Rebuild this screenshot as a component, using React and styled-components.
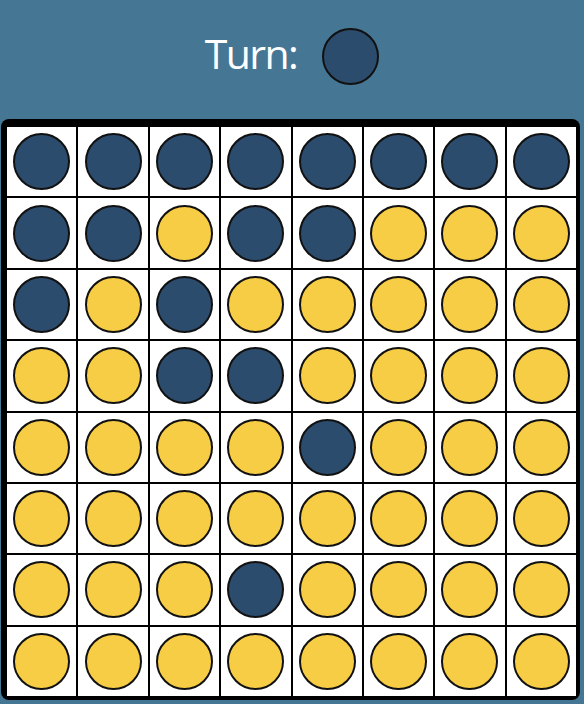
import React from 'react'
import styled, { createGlobalStyle } from 'styled-components'

const GlobalStyle = createGlobalStyle`
  html, body {
    margin: 0;
    padding: 0;
    background: #457795;
  }
  body {
    font-family: "Open Sans", "Noto Sans", sans-serif;
  }
`

const BLUE = '#2c4c6e'
const YELLOW = '#f8cd46'

const board = [
  'BBBBBBBB',
  'BBYBBYYY',
  'BYBYYYYY',
  'YYBBYYYY',
  'YYYYBYYY',
  'YYYYYYYY',
  'YYYBYYYY',
  'YYYYYYYY',
]

const Game = styled.div`
  width: 584px;
  height: 704px;
  overflow: hidden;
`

const TurnBar = styled.header`
  height: 119px;
  box-sizing: border-box;
  padding-bottom: 7px;
  display: flex;
  align-items: center;
  justify-content: center;
  gap: 25px;
  color: #fff;
`

const TurnLabel = styled.span`
  font-size: 41px;
  font-weight: 400;
  letter-spacing: -1.6px;
  line-height: 1;
  margin-top: -5px;
`

const Piece = styled.div`
  width: ${(p) => p.$size}px;
  height: ${(p) => p.$size}px;
  box-sizing: border-box;
  border-radius: 50%;
  border: 2px solid #111;
  background: ${(p) => (p.$color === 'B' ? BLUE : YELLOW)};
`

const Board = styled.div`
  margin-left: 1px;
  width: 579px;
  height: 581px;
  box-sizing: border-box;
  padding: 8px 4px 4px 6px;
  background: #000;
  border-radius: 8px;
  display: grid;
  grid-template-columns: repeat(8, 1fr);
  grid-template-rows: repeat(8, 1fr);
  gap: 2px;
`

const Cell = styled.div`
  background: #fff;
  display: flex;
  align-items: center;
  justify-content: center;
`

export default function App() {
  return (
    <Game>
      <GlobalStyle />
      <TurnBar>
        <TurnLabel>Turn:</TurnLabel>
        <Piece $size={57} $color="B" />
      </TurnBar>
      <Board>
        {board.map((row, r) =>
          row.split('').map((c, i) => (
            <Cell key={`${r}-${i}`}>
              <Piece $size={57} $color={c} />
            </Cell>
          ))
        )}
      </Board>
    </Game>
  )
}
